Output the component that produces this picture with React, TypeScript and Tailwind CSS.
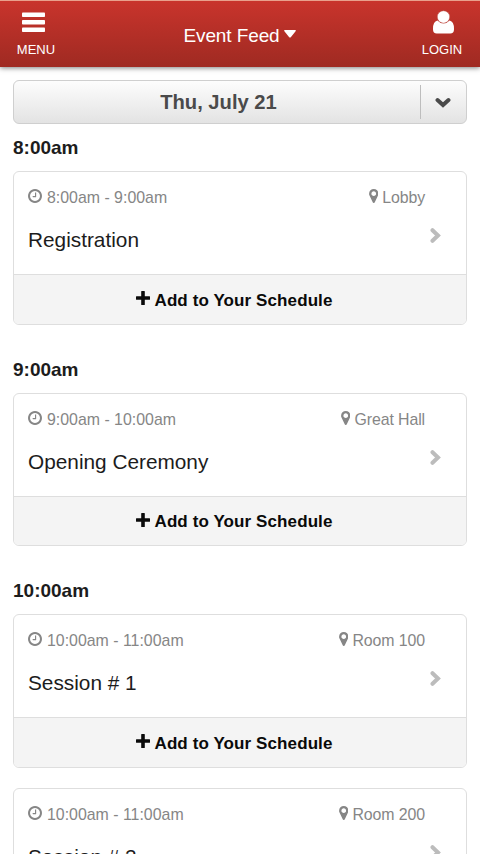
import { FC } from 'react';

interface Session {
  id: number;
  time: string;
  location: string;
  title: string;
}

interface TimeSlot {
  label: string;
  sessions: Session[];
}

const schedule: TimeSlot[] = [
  {
    label: '8:00am',
    sessions: [
      { id: 1, time: '8:00am - 9:00am', location: 'Lobby', title: 'Registration' },
    ],
  },
  {
    label: '9:00am',
    sessions: [
      { id: 2, time: '9:00am - 10:00am', location: 'Great Hall', title: 'Opening Ceremony' },
    ],
  },
  {
    label: '10:00am',
    sessions: [
      { id: 3, time: '10:00am - 11:00am', location: 'Room 100', title: 'Session # 1' },
      { id: 4, time: '10:00am - 11:00am', location: 'Room 200', title: 'Session # 2' },
    ],
  },
];

const ClockIcon: FC = () => (
  <svg className="h-[14px] w-[14px]" viewBox="128 128 1536 1536" fill="currentColor">
    <path d="M1024 544v448q0 14-9 23t-23 9h-320q-14 0-23-9t-9-23v-64q0-14 9-23t23-9h224v-352q0-14 9-23t23-9h64q14 0 23 9t9 23zm416 352q0-148-73-273t-198-198-273-73-273 73-198 198-73 273 73 273 198 198 273 73 273-73 198-198 73-273zm224 0q0 209-103 385.5t-279.5 279.5-385.5 103-385.5-103-279.5-279.5-103-385.5 103-385.5 279.5-279.5 385.5-103 385.5 103 279.5 279.5 103 385.5z" />
  </svg>
);

const MarkerIcon: FC = () => (
  <svg className="h-[14px] w-[9.500px]" viewBox="384 128 1024 1536" fill="currentColor">
    <path d="M1152 640q0-106-75-181t-181-75-181 75-75 181 75 181 181 75 181-75 75-181zm256 0q0 109-33 179l-364 774q-16 33-47.5 52t-67.5 19-67.5-19-46.5-52l-365-774q-33-70-33-179 0-212 150-362t362-150 362 150 150 362z" />
  </svg>
);

const Header: FC = () => (
  <header className="flex h-[67px] justify-between border-t border-[#e9a08c] bg-linear-to-b from-[#c9342c] to-[#9f2a22] text-white shadow-[0_1px_5px_rgba(0,0,0,0.5)] [text-shadow:0_1px_1px_rgba(0,0,0,0.4)]">
    <button className="flex w-[72px] flex-col items-center pt-[11px]">
      <svg className="-ml-[5px] h-5 w-[23px]" viewBox="0 0 23 20" fill="currentColor">
        <rect y="0.500" width="23" height="4.600" rx="0.800" />
        <rect y="8" width="23" height="4.600" rx="0.800" />
        <rect y="15.400" width="23" height="4.600" rx="0.800" />
      </svg>
      <span className="mt-[10px] text-[13px] leading-4">MENU</span>
    </button>
    <button className="flex items-center gap-1 pt-[5px] pl-[3px] text-[19px] tracking-[-0.1px]">
      Event Feed
      <svg className="mb-[5px] h-2 w-3" viewBox="0 0 12 8" fill="currentColor">
        <path d="M.8 0h10.400q1.200.2.400 1.200L6.800 7.200q-.8.8-1.600 0L.4 1.200Q-.4.2.8 0z" />
      </svg>
    </button>
    <button className="flex w-[76px] flex-col items-center pt-[9px]">
      <svg className="ml-[3px] h-6 w-[21px]" viewBox="0 0 22 24" fill="currentColor">
        <path d="M4.600 10.400Q7 13.200 11 13.200t6.400-2.800Q22 11.500 22 19v.5Q22 24 18 24H4Q0 24 0 19.500V19q0-7.500 4.600-8.600z" />
        <circle cx="11" cy="6.700" r="6.500" stroke="#b9473f" strokeWidth="0.500" />
      </svg>
      <span className="mt-2 text-[13px] leading-4">LOGIN</span>
    </button>
  </header>
);

const DatePicker: FC = () => (
  <button className="mx-[13px] mt-[13px] flex h-11 items-center rounded-[6px] border-[1.500px] border-[#cfcfcf] bg-linear-to-b from-[#fdfdfd] to-[#e3e3e3] text-[#4a4a4a]">
    <span className="flex-1 pl-[3px] text-center text-[20.2px] font-bold">Thu, July 21</span>
    <span className="flex h-[34px] w-[46px] items-center justify-center border-l border-[#bdbdbd] pr-[2px]">
      <svg className="h-[11px] w-[16px]" viewBox="0 0 16 11" fill="none">
        <path
          d="M2.500 3l5.500 5 5.500-5"
          stroke="currentColor"
          strokeWidth="4"
          strokeLinecap="round"
        />
      </svg>
    </span>
  </button>
);

const SessionCard: FC<{ session: Session }> = ({ session }) => (
  <div className="mb-5 flex h-[153.5px] flex-col overflow-hidden rounded-[6px] border border-[#dedede] bg-white">
    <div className="flex h-[102px] shrink-0">
      <div className="flex-1 pl-[14px]">
        <div className="mt-4 flex h-5 items-center justify-between text-[15.9px] text-[#868686]">
          <div className="flex items-center gap-[5px]">
            <span className="-mt-1">
              <ClockIcon />
            </span>
            <span>{session.time}</span>
          </div>
          <div className="flex items-center gap-1">
            <span className="-mt-1">
              <MarkerIcon />
            </span>
            <span className="tracking-[-0.1px]">{session.location}</span>
          </div>
        </div>
        <h3 className="mt-[18px] text-[20.8px] leading-7 text-[#1c1c1c]">{session.title}</h3>
      </div>
      <div className="w-[41px] pt-14 pl-[5px] text-[#bcbcbc]">
        <svg className="h-[15px] w-[11px]" viewBox="0 0 11 15" fill="none">
          <path
            d="M2.500 2.200l5.500 5.300-5.500 5.300"
            stroke="currentColor"
            strokeWidth="4"
            strokeLinecap="round"
          />
        </svg>
      </div>
    </div>
    <button className="flex flex-1 items-center justify-center gap-[5px] border-t border-[#dedede] bg-[#f4f4f4] pt-[2px] pr-3 text-[17px] font-bold tracking-[0.1px] text-[#0a0a0a]">
      <svg className="mb-1 h-[14px] w-[14px]" viewBox="0 0 14 14" fill="currentColor">
        <path d="M5.200.5q0-.5.500-.5h2.600q.5 0 .5.500v4.700h4.700q.5 0 .5.500v2.600q0 .5-.5.500H8.800v4.700q0 .5-.5.500H5.700q-.5 0-.5-.5V8.800H.5q-.5 0-.5-.5V5.700q0-.5.500-.5h4.700z" />
      </svg>
      Add to Your Schedule
    </button>
  </div>
);

const App: FC = () => (
  <div className="h-[854px] w-[480px] overflow-hidden bg-white font-['Liberation_Sans',Arial,sans-serif]">
    <div className="flex flex-col">
      <Header />
      <DatePicker />
      <main className="-mt-px px-[13px]">
        {schedule.map((slot) => (
          <section key={slot.label}>
            <h2 className="h-12 pt-[13px] text-[19px] leading-6 font-bold text-[#1c1c1c]">
              {slot.label}
            </h2>
            {slot.sessions.map((session) => (
              <SessionCard key={session.id} session={session} />
            ))}
          </section>
        ))}
      </main>
    </div>
  </div>
);

export default App;
